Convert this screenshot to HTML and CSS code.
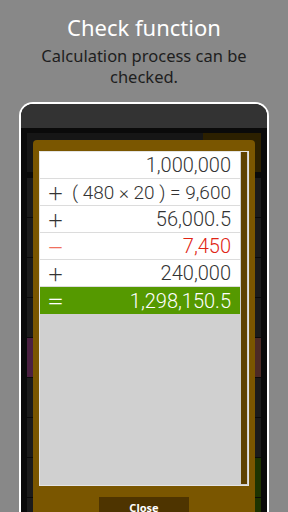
FILE: index.html
```html
<!DOCTYPE html>
<html lang="en">
<head>
  <meta charset="UTF-8">
  <meta name="viewport" content="width=device-width, initial-scale=1.0">
  <title>Check function</title>
  <link rel="stylesheet" href="styles.css">
</head>
<body>
  <header class="intro">
    <h1>Check function</h1>
    <p>Calculation process can be<br>checked.</p>
  </header>
  <section class="phone">
    <div class="toolbar"></div>
    <div class="calc">
      <div class="display"><div class="display-main"></div><div class="display-side"></div></div>
      <div class="key-row"><span class="key"></span><span class="key"></span></div>
      <div class="key-row"><span class="key"></span><span class="key"></span></div>
      <div class="key-row"><span class="key"></span><span class="key"></span></div>
      <div class="key-row"><span class="key"></span><span class="key"></span></div>
      <div class="key-row"><span class="key purple"></span><span class="key brown"></span></div>
      <div class="key-row"><span class="key"></span><span class="key"></span></div>
      <div class="key-row"><span class="key"></span><span class="key"></span></div>
      <div class="key-row"><span class="key"></span><span class="key green"></span></div>
      <div class="key-row"><span class="key"></span><span class="key green"></span></div>
    </div>
    <div class="dialog">
      <div class="list-box">
        <div class="rows">
          <div class="row"><span class="op"></span><span>1,000,000</span></div>
          <div class="row small"><span class="op">＋</span><span>( 480 × 20 ) = 9,600</span></div>
          <div class="row"><span class="op">＋</span><span>56,000.5</span></div>
          <div class="row minus"><span class="op">－</span><span>7,450</span></div>
          <div class="row"><span class="op">＋</span><span>240,000</span></div>
          <div class="row total"><span class="op">＝</span><span>1,298,150.5</span></div>
        </div>
        <div class="scrollbar"></div>
      </div>
      <button class="close-btn">Close</button>
    </div>
  </section>
</body>
</html>
```

FILE: styles.css
```css
*{margin:0;padding:0;box-sizing:border-box}
body{background:#888;font-family:'Noto Sans',sans-serif;width:288px;height:512px;overflow:hidden}
.intro{text-align:center;padding-top:12px}
.intro h1{font-size:22px;line-height:30px;font-weight:400;color:#fff}
.intro p{margin-top:3px;font-size:16.5px;line-height:21px;color:#1e1e1e}
.phone{position:relative;margin:15px 0 0 19px;width:250px;height:430px;border:2px solid #fff;border-bottom:none;border-radius:14px 14px 0 0;background:#0a0a0a;overflow:hidden}
.toolbar{height:24px;background:#333}
.calc{padding:5px 6px 0;display:flex;flex-direction:column;gap:1px}
.display{display:flex;height:39px;margin-bottom:5px}
.display-main{flex:1;background:#161616}
.display-side{width:58px;background:#2c2000}
.key-row{display:flex;justify-content:space-between;height:39px}
.key{width:60px;background:#1b1b1b}
.key.purple{background:#4a1f40}
.key.brown{background:#4c2a25}
.key.green{background:#1d3300}
.dialog{position:absolute;top:36px;left:12px;right:12px;height:400px;background:#7a5600;border-radius:4px;padding:11px 6px 0}
.list-box{display:flex;height:335px;border:1px solid #e4e4e4;background:#d0d0d0}
.rows{width:200px}
.row{display:flex;justify-content:space-between;align-items:center;height:27px;padding:0 9px 0 7px;background:#fff;border-bottom:1px solid #dcdcdc;font-family:Roboto,sans-serif;font-weight:300;font-size:20px;color:#333}
.row.small{font-size:19px}
.row .op{font-family:'Noto Sans CJK JP',sans-serif;font-weight:400;font-size:17px;width:16px}
.row.minus{color:#e02414}
.row.minus .op{color:#f0705e}
.row.total{background:#559900;color:#fff;border-bottom:none}
.scrollbar{width:6px;margin:0 1px 1px 1px;background:#5e4100}
.close-btn{display:block;margin:11px auto 0;width:90px;height:28px;padding-bottom:7px;border:none;background:#4e3400;color:#fff;font-family:'Noto Sans',sans-serif;font-weight:700;font-size:11px}
```
